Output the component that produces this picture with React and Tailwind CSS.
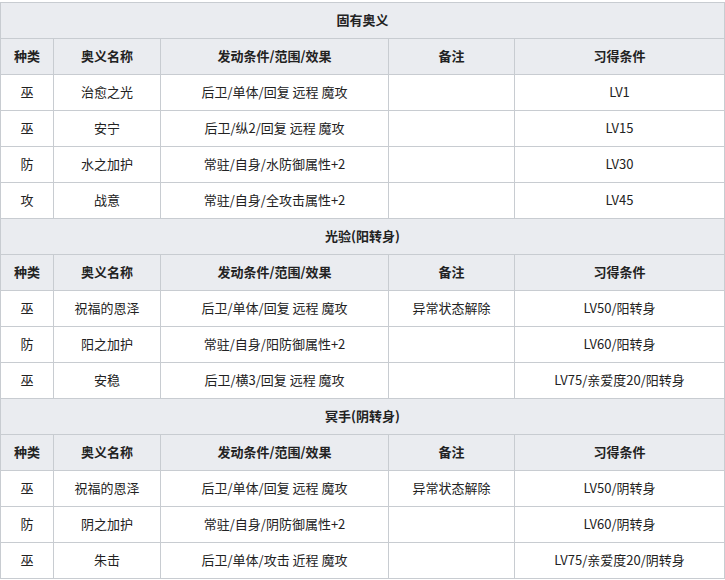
import React from "react";

const sections = [
  {
    title: "固有奥义",
    rows: [
      ["巫", "治愈之光", "后卫/单体/回复 远程 魔攻", "", "LV1"],
      ["巫", "安宁", "后卫/纵2/回复 远程 魔攻", "", "LV15"],
      ["防", "水之加护", "常驻/自身/水防御属性+2", "", "LV30"],
      ["攻", "战意", "常驻/自身/全攻击属性+2", "", "LV45"],
    ],
  },
  {
    title: "光验(阳转身)",
    rows: [
      ["巫", "祝福的恩泽", "后卫/单体/回复 远程 魔攻", "异常状态解除", "LV50/阳转身"],
      ["防", "阳之加护", "常驻/自身/阳防御属性+2", "", "LV60/阳转身"],
      ["巫", "安稳", "后卫/横3/回复 远程 魔攻", "", "LV75/亲爱度20/阳转身"],
    ],
  },
  {
    title: "冥手(阴转身)",
    rows: [
      ["巫", "祝福的恩泽", "后卫/单体/回复 远程 魔攻", "异常状态解除", "LV50/阴转身"],
      ["防", "阴之加护", "常驻/自身/阴防御属性+2", "", "LV60/阴转身"],
      ["巫", "朱击", "后卫/单体/攻击 近程 魔攻", "", "LV75/亲爱度20/阴转身"],
    ],
  },
];

const heads = ["种类", "奥义名称", "发动条件/范围/效果", "备注", "习得条件"];

const cell = "border border-[#c8ccd1] h-[36px] p-0 pb-[2px] text-center align-middle";

export default function App() {
  return (
    <div
      className="bg-white pt-[2px] text-[13px] text-[#222]"
      style={{ fontFamily: '"Noto Sans CJK SC", "Noto Sans", sans-serif' }}
    >
      <table className="border-collapse table-fixed w-[724px]">
        <colgroup>
          <col className="w-[53px]" />
          <col className="w-[107px]" />
          <col className="w-[228px]" />
          <col className="w-[126px]" />
          <col className="w-[210px]" />
        </colgroup>
        <tbody>
          {sections.map((s) => (
            <React.Fragment key={s.title}>
              <tr>
                <th colSpan={5} className={`${cell} bg-[#eaecf0] font-bold`}>
                  {s.title}
                </th>
              </tr>
              <tr>
                {heads.map((h) => (
                  <th key={h} className={`${cell} bg-[#eaecf0] font-bold`}>
                    {h}
                  </th>
                ))}
              </tr>
              {s.rows.map((r, i) => (
                <tr key={i}>
                  {r.map((c, j) => (
                    <td key={j} className={`${cell} font-normal`}>
                      {c}
                    </td>
                  ))}
                </tr>
              ))}
            </React.Fragment>
          ))}
        </tbody>
      </table>
    </div>
  );
}
